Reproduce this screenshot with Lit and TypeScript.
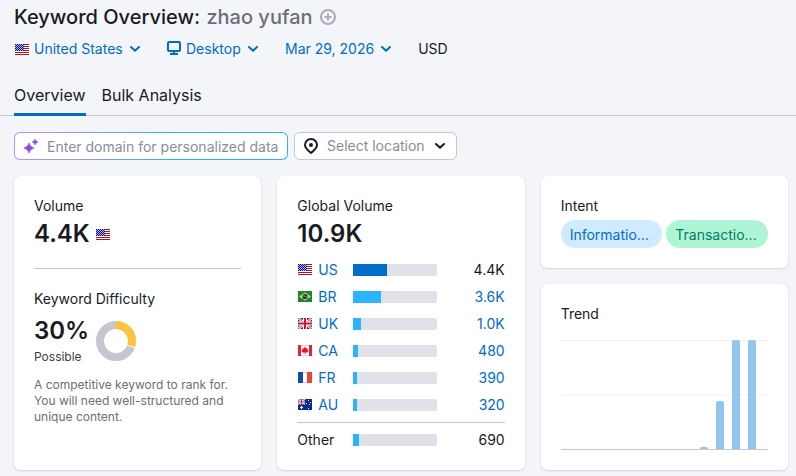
import { LitElement, html, svg, css, nothing } from "lit";
import { customElement, property, state } from "lit/decorators.js";
import { classMap } from "lit/directives/class-map.js";
import { styleMap } from "lit/directives/style-map.js";

interface CountryRow {
  code: string;
  volume: string;
  share: number;
  current?: boolean;
}

const COUNTRIES: CountryRow[] = [
  { code: "US", volume: "4.4K", share: 40, current: true },
  { code: "BR", volume: "3.6K", share: 33 },
  { code: "UK", volume: "1.0K", share: 9 },
  { code: "CA", volume: "480", share: 5 },
  { code: "FR", volume: "390", share: 4 },
  { code: "AU", volume: "320", share: 4 },
];

const TREND = [0, 0, 0, 0, 0, 0, 0, 0, 2, 44, 100, 100];

const FLAGS: Record<string, unknown> = {
  US: svg`
    <rect width="14" height="11" fill="#fff"/>
    <path d="M0 .5H14M0 2.5H14M0 4.5H14M0 6.5H14M0 8.5H14M0 10.5H14" stroke="#b7101c"/>
    <rect width="9" height="7" fill="#10108a"/>
    <path d="M1 .5H9M1 2.5H9M1 4.5H9M1 6.5H9" stroke="#a9aede" stroke-dasharray="1 1"/>
    <path d="M0 1.5H9M0 3.5H9M0 5.5H9" stroke="#a9aede" stroke-dasharray="1 1"/>`,
  BR: svg`
    <rect width="14" height="11" fill="#12883a"/>
    <path d="M7 1.5L13 5.5L7 9.5L1 5.5Z" fill="#f5d41f"/>
    <circle cx="7" cy="5.5" r="2.6" fill="#152a7c"/>
    <path d="M4.8 4.8Q7.4 4.6 9.2 6.5" stroke="#b9c6e0" stroke-width=".7" fill="none"/>`,
  UK: svg`
    <rect width="14" height="11" fill="#1b3580"/>
    <path d="M0 0L14 11M14 0L0 11" stroke="#fff" stroke-width="2.4"/>
    <path d="M0 0L14 11M14 0L0 11" stroke="#d8202f" stroke-width=".9"/>
    <path d="M7 0V11M0 5.5H14" stroke="#fff" stroke-width="4"/>
    <path d="M7 0V11" stroke="#cf142b" stroke-width="2"/>
    <path d="M0 5.5H14" stroke="#cf142b" stroke-width="2"/>`,
  CA: svg`
    <rect width="14" height="11" fill="#fff"/>
    <rect width="3" height="11" fill="#e5233b"/>
    <rect x="11" width="3" height="11" fill="#e5233b"/>
    <path d="M7 1.5L8 3.3L9 3L8.8 4.6L10.4 4.2L10 5.6L10.5 6.2L8.6 7.7L7.3 7.6V9.3H6.7V7.6L5.4 7.7L3.5 6.2L4 5.6L3.6 4.2L5.2 4.6L5 3L6 3.3Z" fill="#f5101e"/>
    <path d="M3 .5H11M3 10.5H11" stroke="#d6d6da"/>`,
  FR: svg`
    <rect width="14" height="11" fill="#fff"/>
    <rect width="5" height="11" fill="#0b4fa2"/>
    <rect x="9" width="5" height="11" fill="#ef4135"/>
    <path d="M5 .5H9M5 10.5H9" stroke="#d6d6da"/>`,
  AU: svg`
    <rect width="14" height="11" fill="#0a2a8c"/>
    <path d="M0 0L7 5.6M7 0L0 5.6" stroke="#f1d4dc" stroke-width="1.3"/>
    <path d="M3.5 0V6M0 2.8H7" stroke="#fff" stroke-width="2"/>
    <path d="M3.5 0V6M0 2.8H7" stroke="#e0283c" stroke-width="1"/>
    <path d="M2 8.5H5M3.5 7V10" stroke="#fff" stroke-width="1.2"/>
    <path d="M10 1.5H11M8 4.5H9M12 3.5H13M10 9.5H11M11 5.5H12" stroke="#e6ebfa"/>`,
};

const chevron = html`<svg class="chevron" viewBox="0 0 10 6" width="10" height="6" aria-hidden="true">
  <path d="M1 1L5 4.7L9 1" fill="none" stroke="currentColor" stroke-width="2" stroke-linecap="round"/>
</svg>`;

@customElement("country-flag")
export class CountryFlag extends LitElement {
  static styles = css`
    :host { display: block; width: 14px; height: 11px; }
    .flag { display: block; width: 14px; height: 11px; }
  `;
  @property() code = "US";

  render() {
    return html`<svg class="flag" viewBox="0 0 14 11" aria-hidden="true">${FLAGS[this.code]}</svg>`;
  }
}

@customElement("difficulty-ring")
export class DifficultyRing extends LitElement {
  static styles = css`
    :host { display: block; width: 40px; height: 40px; }
    .ring { display: block; }
  `;
  @property({ type: Number }) value = 0;

  render() {
    return html`<svg class="ring" viewBox="0 0 40 40" width="40" height="40" role="img" aria-label="Difficulty">
      <g transform="rotate(-90 20 20)" fill="none" stroke-width="8">
        <circle cx="20" cy="20" r="16" stroke="#c4c7cf"/>
        <circle cx="20" cy="20" r="16" stroke="#fff" pathLength="100" stroke-dasharray="${this.value + 1} 100"/>
        <circle cx="20" cy="20" r="16" stroke="#fdc23c" pathLength="100" stroke-dasharray="${this.value} 100"/>
      </g>
    </svg>`;
  }
}

@customElement("trend-chart")
export class TrendChart extends LitElement {
  static styles = css`
    :host { display: block; }
    .plot {
      display: flex;
      align-items: flex-end;
      justify-content: space-between;
      box-sizing: border-box;
      height: 110px;
      padding: 0 12px 0 11px;
      border-bottom: 1px solid #c4c7cf;
      background:
        linear-gradient(#f0f0f4, #f0f0f4) 0 0 / 100% 1px no-repeat,
        linear-gradient(#f7f7f9, #f7f7f9) 0 54px / 100% 2px no-repeat;
    }
    .bar { width: 8px; border-radius: 2px 2px 0 0; background: #92c6ee; }
  `;
  @property({ attribute: false }) values: number[] = [];

  render() {
    return html`<div class="plot" role="img" aria-label="Trend">
      ${this.values.map((v) => html`<div class="bar" style=${styleMap({ height: `${v}%` })}></div>`)}
    </div>`;
  }
}

@customElement("app-root")
export class AppRoot extends LitElement {
  static styles = css`
    :host {
      display: block;
      box-sizing: border-box;
      min-height: 100vh;
      background: #f4f5f9;
      color: #191b23;
      font: 14px/20px Inter, "Liberation Sans", sans-serif;
    }
    h1, h2, p { margin: 0; font: inherit; }
    button, select, input { font: inherit; color: inherit; border: 0; background: none; margin: 0; padding: 0; }
    button { cursor: pointer; }
    a { color: #006dca; text-decoration: none; }
    svg { display: block; flex: none; }
    select { appearance: none; cursor: pointer; }

    .title { display: flex; align-items: center; padding: 5px 14px 0; gap: 7px; font-size: 20px; line-height: 24px; }
    .title h1 { font-weight: 500; }
    .keyword { margin-left: 1px; color: #6c6e79; }
    .add { color: #a9abb6; }

    .filters { display: flex; align-items: center; gap: 26px; padding: 10px 15px 0; }
    .filter { position: relative; display: flex; align-items: center; color: #006dca; }
    .filter select, .filter button { display: flex; align-items: center; height: 20px; padding-right: 18px; }
    .filter.leading select { padding-left: 19px; }
    .filter .mark, .filter .chevron { position: absolute; pointer-events: none; }
    .filter .mark { left: 0; }
    .filter .chevron { right: 1px; }

    .tabs { display: flex; gap: 16px; margin-top: 24px; padding: 0 14px; border-bottom: 1px solid #c4c7cf; font-size: 16px; }
    .tab { height: 33px; margin-bottom: -1px; padding-bottom: 6px; box-sizing: border-box; border-bottom: 3px solid transparent; }
    .tab.active { border-bottom-color: #006dca; }

    .search { display: flex; gap: 6px; padding: 16px 14px; }
    .field { position: relative; display: flex; align-items: center; box-sizing: border-box; height: 28px; border: 1px solid #c4c7cf; border-radius: 6px; background: #fff; color: #191b23; }
    .field .mark { position: absolute; left: 9px; pointer-events: none; }
    .field .chevron { position: absolute; right: 11px; pointer-events: none; }
    .domain {
      width: 274px;
      border-color: transparent;
      background: linear-gradient(#fff, #fff) padding-box, linear-gradient(90deg, #c68cf5, #2bb3ff 60%) border-box;
    }
    .domain input { width: 100%; height: 100%; padding-left: 32px; outline: 0; }
    .domain input::placeholder { color: #8a8e9b; opacity: 1; }
    .place { width: 163px; }
    .place select { width: 100%; height: 100%; padding-left: 32px; color: #8a8e9b; }

    .cards { display: grid; grid-template-columns: repeat(3, minmax(0, 1fr)); gap: 16px; padding: 0 8px 6px 14px; }
    .column { display: flex; flex-direction: column; gap: 16px; }
    .card { padding: 20px; border-radius: 6px; background: #fff; box-shadow: 0 0 1px rgba(25, 27, 35, 0.16), 0 1px 2px rgba(25, 27, 35, 0.12); }
    .figure { display: flex; align-items: center; gap: 6px; font-size: 24px; line-height: 32px; font-weight: 600; }
    .total { margin-top: 2px; }
    .divider { height: 1px; margin: 18px 0 20px; border: 0; background: #c4c7cf; }
    .difficulty { display: flex; align-items: center; gap: 7px; margin: 6px 0 10px; }
    .level { font-size: 12px; line-height: 20px; color: #3b3d48; }
    .note { font-size: 12px; line-height: 16px; color: #6c6e79; }

    .volumes { width: 100%; margin-top: 6px; border-collapse: collapse; table-layout: fixed; }
    .volumes th, .volumes td { height: 27px; padding: 0; font-weight: 400; text-align: left; vertical-align: middle; }
    .volumes .amount { text-align: right; }
    .volumes .name { width: 56px; }
    .volumes .meter { width: 84px; }
    .volumes .last th, .volumes .last td { padding-bottom: 4px; }
    .volumes tfoot th, .volumes tfoot td { height: 20px; padding-top: 7px; border-top: 1px solid #c4c7cf; }
    .country { display: flex; align-items: center; gap: 6px; padding-left: 1px; }
    .track { height: 12px; overflow: hidden; border-radius: 0 2px 2px 0; background: #e0e1e9; }
    .fill { height: 100%; background: #2bb3ff; }
    .fill.current { background: #006dca; }

    .pills { display: flex; gap: 4px; margin-top: 4px; }
    .pill { flex: 1; min-width: 0; box-sizing: border-box; height: 28px; padding: 5px 9px 3px; border-radius: 14px; overflow: hidden; white-space: nowrap; }
    .informational { background: #d0eaff; color: #006dca; }
    .transactional { background: #aef5d6; color: #007c65; }
    .chart { margin-top: 16px; }
  `;

  @state() private tab = "Overview";

  private meter(share: number, current = false) {
    return html`<div class="track">
      <div class=${classMap({ fill: true, current })} style=${styleMap({ width: `${share}%` })}></div>
    </div>`;
  }

  private row(c: CountryRow, i: number) {
    return html`<tr class=${i === COUNTRIES.length - 1 ? "last" : nothing}>
      <th scope="row" class="name">
        <a class="country" href="#${c.code}"><country-flag code=${c.code}></country-flag>${c.code}</a>
      </th>
      <td class="meter">${this.meter(c.share, c.current)}</td>
      <td class="amount">${c.current ? c.volume : html`<a href="#${c.code}">${c.volume}</a>`}</td>
    </tr>`;
  }

  render() {
    return html`
      <header>
        <div class="title">
          <h1>Keyword Overview: <span class="keyword">zhao yufan</span></h1>
          <button class="add" aria-label="Add keyword">
            <svg viewBox="0 0 16 16" width="16" height="16" fill="none" stroke="currentColor" stroke-width="2">
              <circle cx="8" cy="8" r="7"/><path d="M8 4.5V11.5M4.5 8H11.5"/>
            </svg>
          </button>
        </div>
        <div class="filters">
          <div class="filter leading">
            <country-flag class="mark" code="US"></country-flag>
            <select aria-label="Country"><option>United States</option></select>${chevron}
          </div>
          <div class="filter leading">
            <svg class="mark" viewBox="0 0 14 16" width="14" height="16" fill="none" stroke="currentColor" stroke-width="2" aria-hidden="true">
              <rect x="1" y="1" width="12" height="9" rx="1"/><path d="M7 10V13M3 13H11"/>
            </svg>
            <select aria-label="Device"><option>Desktop</option></select>${chevron}
          </div>
          <div class="filter"><button aria-haspopup="dialog">Mar 29, 2026</button>${chevron}</div>
          <span>USD</span>
        </div>
        <div class="tabs" role="tablist">
          ${["Overview", "Bulk Analysis"].map(
            (t) => html`<button role="tab" aria-selected=${this.tab === t ? "true" : "false"}
              class=${classMap({ tab: true, active: this.tab === t })} @click=${() => (this.tab = t)}>${t}</button>`
          )}
        </div>
      </header>

      <div class="search">
        <div class="field domain">
          <svg class="mark" viewBox="0 0 14 14" width="14" height="14" fill="#8649e1" aria-hidden="true">
            <path d="M5 4Q5.9 8.1 10 9Q5.9 9.9 5 14Q4.1 9.9 0 9Q4.1 8.1 5 4Z" stroke="#8649e1" stroke-width=".7"/>
            <path d="M11 0Q11.5 2.5 14 3Q11.5 3.5 11 6Q10.5 3.5 8 3Q10.5 2.5 11 0Z" stroke="#8649e1" stroke-width=".5"/>
          </svg>
          <input type="text" aria-label="Domain" placeholder="Enter domain for personalized data">
        </div>
        <div class="field place">
          <svg class="mark" viewBox="0 0 14 16" width="14" height="16" aria-hidden="true">
            <path d="M7 1A6 6 0 0 1 13 7C13 10.2 10.5 12.2 7 15C3.5 12.2 1 10.2 1 7A6 6 0 0 1 7 1Z" fill="none" stroke="currentColor" stroke-width="2"/>
            <circle cx="7" cy="7" r="2" fill="currentColor"/>
          </svg>
          <select aria-label="Location"><option>Select location</option></select>${chevron}
        </div>
      </div>

      <main class="cards">
        <section class="card">
          <h2>Volume</h2>
          <div class="figure total">4.4K<country-flag code="US"></country-flag></div>
          <hr class="divider">
          <h2>Keyword Difficulty</h2>
          <div class="difficulty">
            <div>
              <div class="figure">30%</div>
              <div class="level">Possible</div>
            </div>
            <difficulty-ring .value=${30}></difficulty-ring>
          </div>
          <p class="note">A competitive keyword to rank for. You will need well-structured and unique content.</p>
        </section>

        <section class="card">
          <h2>Global Volume</h2>
          <div class="figure total">10.9K</div>
          <table class="volumes" aria-label="Volume by country">
            <tbody>${COUNTRIES.map((c, i) => this.row(c, i))}</tbody>
            <tfoot>
              <tr>
                <th scope="row" class="name">Other</th>
                <td class="meter">${this.meter(7)}</td>
                <td class="amount">690</td>
              </tr>
            </tfoot>
          </table>
        </section>

        <div class="column">
          <section class="card">
            <h2>Intent</h2>
            <div class="pills">
              <span class="pill informational">Informatio...</span>
              <span class="pill transactional">Transactio...</span>
            </div>
          </section>
          <section class="card">
            <h2>Trend</h2>
            <trend-chart class="chart" .values=${TREND}></trend-chart>
          </section>
        </div>
      </main>
    `;
  }
}
